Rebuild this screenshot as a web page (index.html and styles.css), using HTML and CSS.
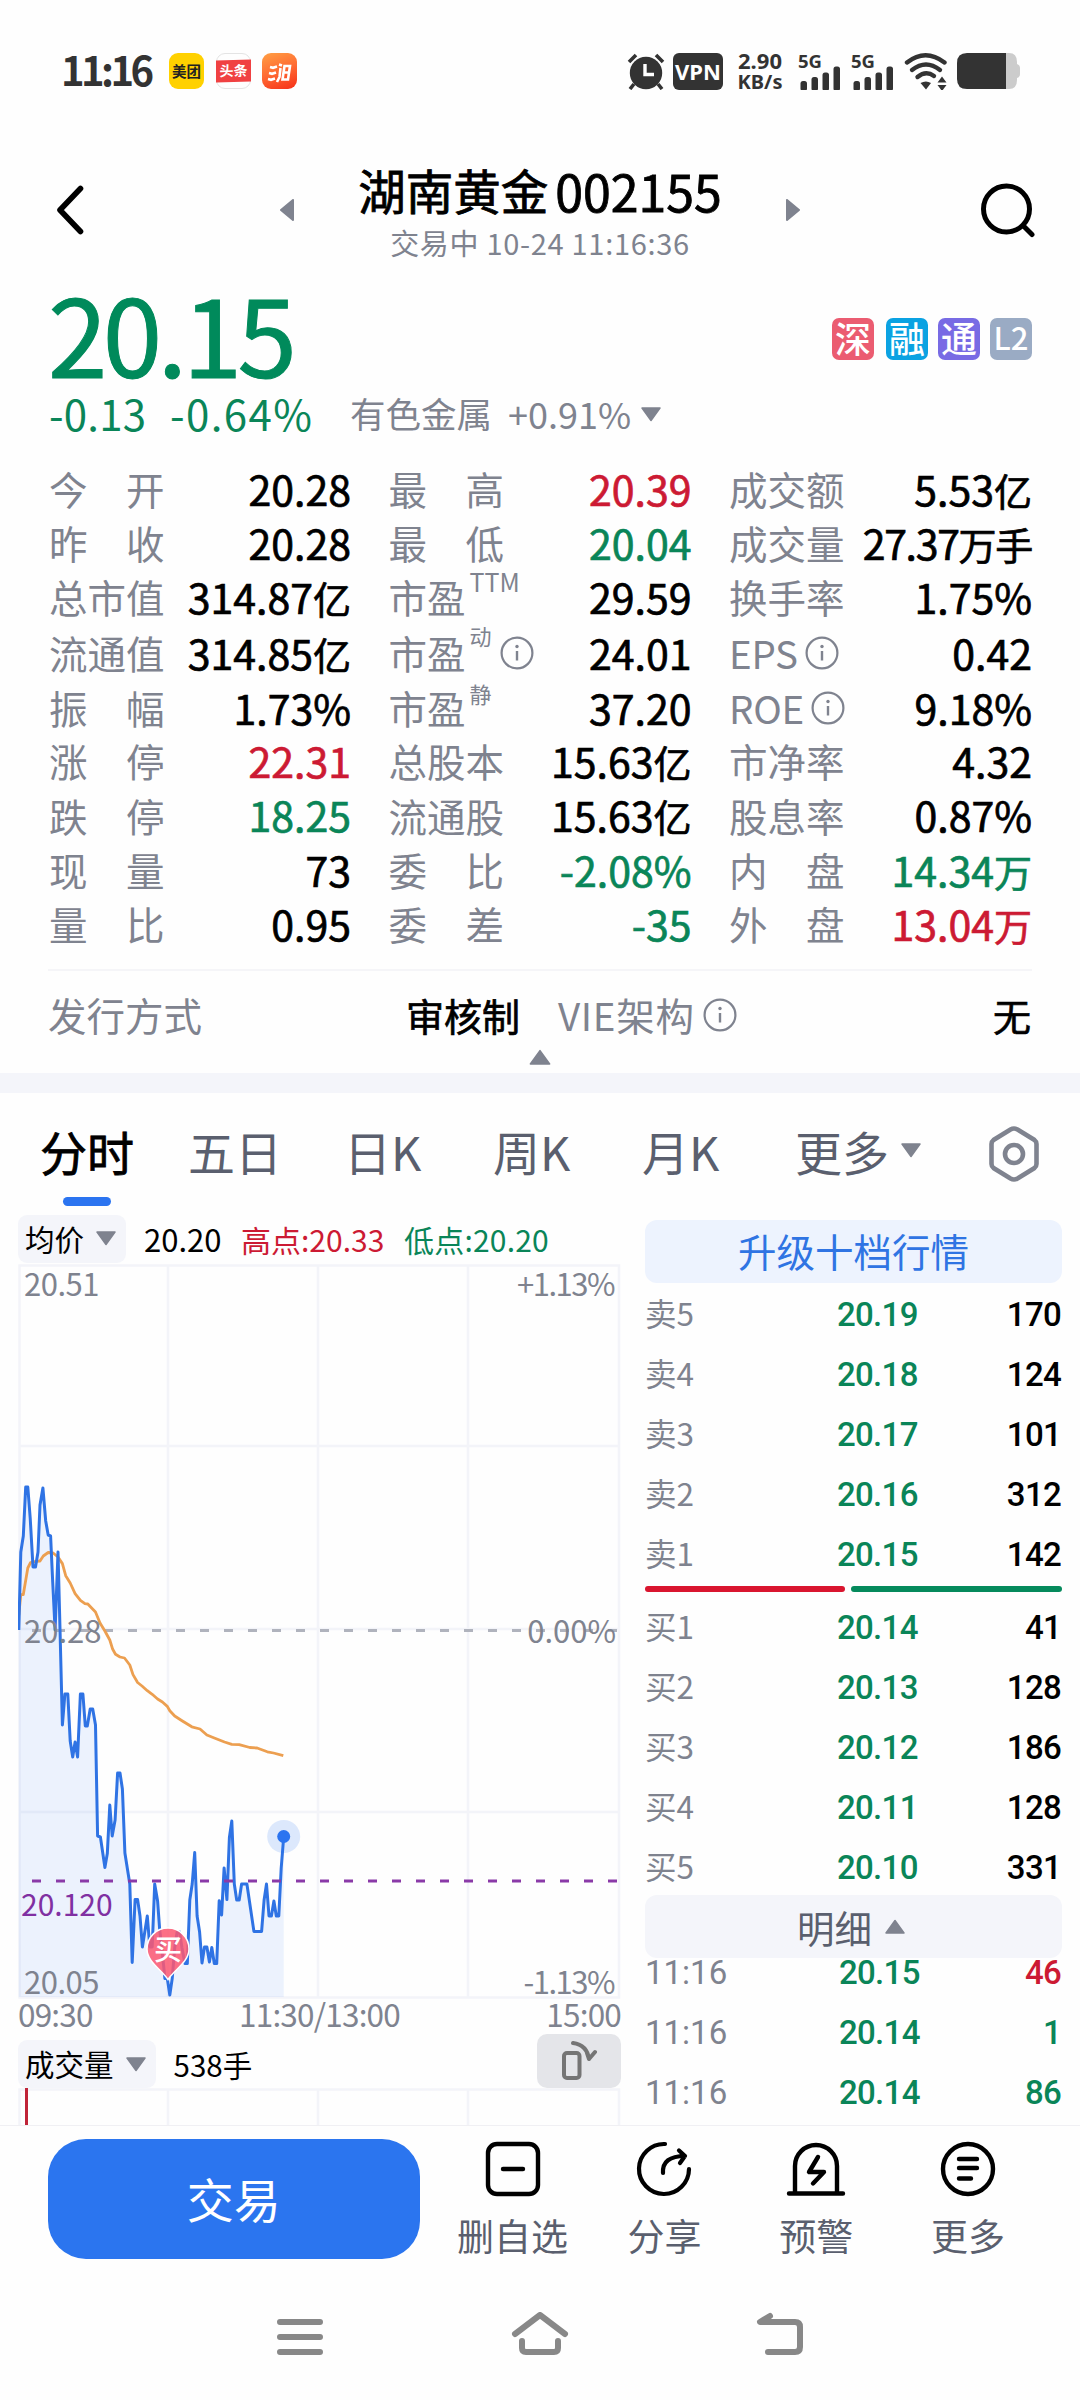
FILE: index.html
```
<!DOCTYPE html>
<html lang="zh-CN">
<head>
    <meta charset="UTF-8">
    <meta name="viewport" content="width=device-width, initial-scale=1.0">
    <title>湖南黄金 002155</title>
    <link rel="stylesheet" href="styles.css">
</head>
<body>

    <svg width="0" height="0" class="defs">
        <symbol id="info" viewBox="0 0 34 34">
            <circle cx="17" cy="17" r="15.4" fill="none" stroke="#7f838f" stroke-width="2.2"/>
            <path d="M17 15v9.5" stroke="#7f838f" stroke-width="2.4"/>
            <circle cx="17" cy="10.5" r="1.7" fill="#7f838f"/>
        </symbol>
        <symbol id="down" viewBox="0 0 22 15">
            <path d="M2 1h18L11 13.5z" fill="#7f838f" stroke="#7f838f" stroke-width="1.5" stroke-linejoin="round"/>
        </symbol>
        <symbol id="up" viewBox="0 0 22 15">
            <path d="M2 14h18L11 1.5z" fill="#7f838f" stroke="#7f838f" stroke-width="1.5" stroke-linejoin="round"/>
        </symbol>
        <symbol id="signal" viewBox="0 0 43 36">
            <g fill="#333">
                <rect x="2.5" y="27.5" width="6.5" height="10" rx="2.5"/>
                <rect x="13.5" y="23.5" width="6.5" height="14" rx="2.5"/>
                <rect x="24.5" y="19" width="6.5" height="18.5" rx="2.5"/>
                <rect x="35.5" y="13" width="6.5" height="24.5" rx="2.5"/>
            </g>
        </symbol>
    </svg>

    <!-- status bar -->
    <div class="status-bar">
        <span class="clock">11:16</span>
        <span class="app app-meituan">美团</span>
        <span class="app app-toutiao"><b>头条</b></span>
        <span class="app app-hot">
            <svg width="35" height="35" viewBox="0 0 35 35" fill="none" stroke="#fff" stroke-width="2.6">
                <path d="M8 13l3 .8 4-1.300M7 19l3 .8 4-1.300M6 25l3 .8 4-1.300M17 10.500l3 1M18.500 14l-1 9-2.500 5M22.500 12h5.500l-2 13.500h-5.500zM21.500 18.500h5"/>
            </svg>
        </span>
        <div class="status-right">
            <svg class="alarm" width="38" height="37" viewBox="0 0 38 37">
                <circle cx="19" cy="20" r="16.2" fill="#333"/>
                <path d="M2 9l7-7M36 9l-7-7" stroke="#333" stroke-width="3.6"/>
                <path d="M7 31l-4 5M31 31l4 5" stroke="#333" stroke-width="3.6"/>
                <path d="M18 11v10.5h9" fill="none" stroke="#fff" stroke-width="3.4"/>
            </svg>
            <span class="vpn">VPN</span>
            <span class="speed">2.90<br>KB/s</span>
            <span class="signal"><i>5G</i><svg width="43" height="37"><use href="#signal"/></svg></span>
            <span class="signal"><i>5G</i><svg width="43" height="37"><use href="#signal"/></svg></span>
            <svg class="wifi" width="44" height="38" viewBox="0 0 44 38">
                <g fill="none" stroke="#333" stroke-width="4.4" stroke-linecap="round">
                    <path d="M3 10.500q18.500-14.500 37.500 0"/>
                    <path d="M8 18q14-11 28 0"/>
                    <path d="M13.500 25q8.500-7 16.500-1"/>
                </g>
                <path d="M16.500 31q5.500-3 10.500 0l-5 6.500zM33.500 30.500h9l-4.500-6zM33.500 33h9l-4.500 6z" fill="#333"/>
            </svg>
            <svg class="battery" width="64" height="36" viewBox="0 0 64 36">
                <path d="M40 0h12q8 0 8 9v2q3 1 3 4v6q0 3-3 4v2q0 9-8 9H40z" fill="#ccc"/>
                <path d="M49 0H10Q0 0 0 10v16q0 10 10 10h39z" fill="#333"/>
            </svg>
        </div>
    </div>

    <!-- title -->
    <div class="header">
        <svg width="28" height="50" viewBox="0 0 28 50" fill="none" stroke="#000" stroke-width="5.6" stroke-linecap="round" stroke-linejoin="round">
            <path d="M23.500 3.500L3 25l20.500 21.500"/>
        </svg>
        <svg width="14" height="22" viewBox="0 0 14 22"><path d="M1 11L13 1v20z" fill="#7f838f" stroke="#7f838f" stroke-linejoin="round" stroke-width="2"/></svg>
        <div class="title">
            <h1><span>湖南黄金</span><span class="code">002155</span></h1>
            <p>交易中 10-24 11:16:36</p>
        </div>
        <svg width="14" height="22" viewBox="0 0 14 22"><path d="M13 11L1 1v20z" fill="#7f838f" stroke="#7f838f" stroke-linejoin="round" stroke-width="2"/></svg>
        <svg class="search" width="54" height="56" viewBox="0 0 54 56" fill="none" stroke="#000" stroke-width="5" stroke-linecap="round">
            <circle cx="25.500" cy="27" r="23"/>
            <path d="M43 44.500l8 8"/>
        </svg>
    </div>

    <!-- price -->
    <div class="quote">
        <div class="price">20.15</div>
        <div class="tags">
            <span class="tag tag-red">深</span>
            <span class="tag tag-blue">融</span>
            <span class="tag tag-purple">通</span>
            <span class="tag tag-grey">L2</span>
        </div>
    </div>
    <div class="change">
        <span class="green diff">-0.13</span>
        <span class="green pct">-0.64%</span>
        <span class="sector">有色金属</span>
        <span class="sector-pct">+0.91%</span>
        <svg width="22" height="15"><use href="#down"/></svg>
    </div>

    <div class="stats">
        <div class="cell"><label>今　开</label><b>20.28</b></div>
        <div class="cell"><label>最　高</label><b class="red">20.39</b></div>
        <div class="cell"><label>成交额</label><b>5.53<i>亿</i></b></div>

        <div class="cell"><label>昨　收</label><b>20.28</b></div>
        <div class="cell"><label>最　低</label><b class="green">20.04</b></div>
        <div class="cell"><label>成交量</label><b class="tight">27.37<i>万手</i></b></div>

        <div class="cell"><label>总市值</label><b>314.87<i>亿</i></b></div>
        <div class="cell"><label>市盈</label><em class="ttm">TTM</em><b>29.59</b></div>
        <div class="cell"><label>换手率</label><b>1.75%</b></div>

        <div class="cell"><label>流通值</label><b>314.85<i>亿</i></b></div>
        <div class="cell"><label>市盈</label><em>动</em><svg width="34" height="34"><use href="#info"/></svg><b>24.01</b></div>
        <div class="cell ratio-name"><label>EPS</label><svg width="34" height="34"><use href="#info"/></svg><b>0.42</b></div>

        <div class="cell"><label>振　幅</label><b>1.73%</b></div>
        <div class="cell"><label>市盈</label><em>静</em><b>37.20</b></div>
        <div class="cell ratio-name"><label>ROE</label><svg width="34" height="34"><use href="#info"/></svg><b>9.18%</b></div>

        <div class="cell"><label>涨　停</label><b class="red">22.31</b></div>
        <div class="cell"><label>总股本</label><b>15.63<i>亿</i></b></div>
        <div class="cell"><label>市净率</label><b>4.32</b></div>

        <div class="cell"><label>跌　停</label><b class="green">18.25</b></div>
        <div class="cell"><label>流通股</label><b>15.63<i>亿</i></b></div>
        <div class="cell"><label>股息率</label><b>0.87%</b></div>

        <div class="cell"><label>现　量</label><b>73</b></div>
        <div class="cell"><label>委　比</label><b class="green">-2.08%</b></div>
        <div class="cell"><label>内　盘</label><b class="green">14.34<i>万</i></b></div>

        <div class="cell"><label>量　比</label><b>0.95</b></div>
        <div class="cell"><label>委　差</label><b class="green">-35</b></div>
        <div class="cell"><label>外　盘</label><b class="red">13.04<i>万</i></b></div>
    </div>

    <div class="issue">
        <div class="cell"><label>发行方式</label><b><i>审核制</i></b></div>
        <div class="cell"><label class="vie">VIE架构</label><svg width="34" height="34"><use href="#info"/></svg><b><i>无</i></b></div>
    </div>
    <div class="collapse"><svg width="24" height="16"><use href="#up"/></svg></div>

    <!-- period tabs -->
    <div class="tabs">
        <span class="tab active">分时</span>
        <span class="tab">五日</span>
        <span class="tab">日K</span>
        <span class="tab">周K</span>
        <span class="tab">月K</span>
        <span class="tab more">更多<svg width="22" height="15"><use href="#down"/></svg></span>
        <svg class="settings" width="52" height="56" viewBox="0 0 52 56" fill="none" stroke="#7f838f">
            <path d="M22.500 3.500q3.500-2 7 0l17 10.500q2 1.500 2 4v20q0 2.500-2 4l-17 10.500q-3.500 2-7 0L5.500 42q-2-1.500-2-4V18q0-2.500 2-4z" stroke-width="4.6"/>
            <circle cx="26" cy="28" r="9" stroke-width="4.600"/>
        </svg>
    </div>

    <div class="main">
        <div class="chart-col">
            <div class="legend">
                <span class="chip">均价<svg width="22" height="15"><use href="#down"/></svg></span>
                <span class="avg">20.20</span>
                <span class="red high">高点:20.33</span>
                <span class="green low">低点:20.20</span>
            </div>
            <div class="chart">
                <svg width="603" height="736" viewBox="0 0 603 736">
                    <g fill="none" stroke="#f3f4f9" stroke-width="2.5">
                        <path d="M1.500 2.500h599.500v732H1.500zM150 2v732M300 2v732M450 2v732M2 183h599M2 366h599M2 549h599"/>
                    </g>
                    <path id="area" fill="#2b74f0" fill-opacity=".085"/>
                    <path d="M14 367.500h589" stroke="#b0b3bd" stroke-width="3" stroke-dasharray="9 15"/>
                    <polyline fill="none" stroke="#ec9f50" stroke-width="2.800" stroke-linejoin="round" points="0.8,352 2.8,331.6 5.3,331.6 9.8,305 12.6,299.5 17.9,298.4 22,298 25.3,293 30.2,289.5 35.1,290 40,294 44.4,300.6 47.7,312.7 52.2,320 57.1,330.6 62.4,337.4 66.9,340.6 69.8,341 77.5,349 82,360 86.9,368 91.8,377 94.7,386.3 97.5,391.3 102,394 106.5,395 111.8,402 115,411.6 119.6,419.5 124,423 129.3,427.7 134.2,431.3 139.6,436 144.4,439 149.3,443.4 151.8,447.7 156.7,453 164,457.7 173.8,463.8 182,466 188.9,472 196.3,475 206.5,479 213.8,481.3 221.2,481.6 231.8,484.5 239.1,485 249.3,488.8 255.5,490 265.3,492.7"/>
                    <polyline id="price-line" fill="none" stroke="#2f73e4" stroke-width="3" stroke-linejoin="round" points="0.8,367 2.8,289 5.3,273 7.7,224 9.8,224 12.2,255 15,304 17.5,304 20,289 22,242 24.9,225 27.7,258 30.2,272 32.6,273 34.7,319 37.1,367 40,289 42,366 44.4,462 46.9,431 49.8,431 52.2,478 54.7,494 57.1,479 59.6,494 62.4,431 64.9,431 67.3,463 69.3,463 72.2,446 74.7,446 77.5,462 79.6,573 82.4,574 86.9,604.5 89.3,590.6 91.8,542 94.2,573 97.1,557 99.6,510 102,510 104.4,526 106.9,590 111.8,621 114.2,699.5 117.1,636.6 119.6,636.6 122,653 124.4,684 129.3,653 131.8,684 134.2,684 136.7,621 139.6,638 141.6,665.6 144.4,690.6 146.9,715.6 149.3,715.6 151.8,732 154.2,715.6 156.7,685 159.1,669 161.6,669 164,685 166.9,700.6 169.3,700.6 171.8,637 174.2,621 176.7,589.5 179.1,653 181.6,669 184,700 186.5,684 188.9,684 191.4,699 193.8,684.5 196.3,700.6 198.7,700.6 201.2,637.7 203.6,652 206.1,605 208.9,636.6 211.4,574.5 213.8,558 216.3,621 218.7,637 221.2,637 223.6,621 228.9,621 235.9,668.4 243.6,668.4 246.1,637 248.5,621 251,653 253.4,653 255.9,638 258.3,653 260.8,653 263.2,605 265.7,574"/>
                    <path d="M14 618h589" stroke="#8a3aa8" stroke-width="2.800" stroke-dasharray="9 15"/>
                    <circle cx="265.700" cy="573.500" r="16.500" fill="#2b74f0" fill-opacity=".16"/>
                    <circle cx="265.700" cy="573.500" r="6.500" fill="#2b74f0"/>
                    <path d="M150 716.500C144 707 129 699 129 686a21 21 0 0 1 42 0C171 699 156 707 150 716.500z" fill="#fb5872" fill-opacity=".86" stroke="#fff" stroke-width="1.500"/>
                    <text x="150" y="697" text-anchor="middle" class="pin-text">买</text>
                </svg>
                <span class="axis top">20.51</span>
                <span class="axis top right">+1.13%</span>
                <span class="axis mid">20.28</span>
                <span class="axis mid right zero">0.00%</span>
                <span class="axis cost">20.120</span>
                <span class="axis bottom">20.05</span>
                <span class="axis bottom right">-1.13%</span>
            </div>
            <div class="times"><span>09:30</span><span>11:30/13:00</span><span>15:00</span></div>
            <div class="volume-bar">
                <span class="chip">成交量<svg width="22" height="15"><use href="#down"/></svg></span>
                <span class="hands">538手</span>
                <span class="rotate">
                    <svg width="36" height="42" viewBox="0 0 36 42" fill="none" stroke="#757575" stroke-width="4" stroke-linecap="round" stroke-linejoin="round">
                        <rect x="3" y="13" width="15.500" height="25" rx="3"/>
                        <path d="M12 3q14 2 16 16M28 19l6-7M28 19l-2-6"/>
                    </svg>
                </span>
            </div>
            <svg class="volume" width="603" height="39" viewBox="0 0 603 39">
                <path d="M1.500 40V1.500H601V40M150 2v38M300 2v38M450 2v38" fill="none" stroke="#f3f4f9" stroke-width="2.500"/>
                <path d="M8.500 0v39" stroke="#c02438" stroke-width="3"/>
            </svg>
        </div>

        <div class="book">
            <div class="upgrade">升级十档行情</div>
            <div class="level"><span>卖5</span><b class="green">20.19</b><b>170</b></div>
            <div class="level"><span>卖4</span><b class="green">20.18</b><b>124</b></div>
            <div class="level"><span>卖3</span><b class="green">20.17</b><b>101</b></div>
            <div class="level"><span>卖2</span><b class="green">20.16</b><b>312</b></div>
            <div class="level"><span>卖1</span><b class="green">20.15</b><b>142</b></div>
            <div class="ratio"><i class="buy"></i><i class="sell"></i></div>
            <div class="level"><span>买1</span><b class="green">20.14</b><b>41</b></div>
            <div class="level"><span>买2</span><b class="green">20.13</b><b>128</b></div>
            <div class="level"><span>买3</span><b class="green">20.12</b><b>186</b></div>
            <div class="level"><span>买4</span><b class="green">20.11</b><b>128</b></div>
            <div class="level"><span>买5</span><b class="green">20.10</b><b>331</b></div>
            <div class="detail">明细<svg width="22" height="15"><use href="#up"/></svg></div>
            <div class="ticks">
                <div class="level tick"><span>11:16</span><b class="green">20.15</b><b class="red">46</b></div>
                <div class="level tick"><span>11:16</span><b class="green">20.14</b><b class="green">1</b></div>
                <div class="level tick"><span>11:16</span><b class="green">20.14</b><b class="green">86</b></div>
            </div>
        </div>
    </div>

    <!-- bottom actions -->
    <div class="actions">
        <button class="trade">交易</button>
        <div class="action">
            <svg width="56" height="56" viewBox="0 0 56 56" fill="none" stroke="#000" stroke-width="4.400" stroke-linecap="round">
                <rect x="3" y="3" width="50" height="50" rx="9"/>
                <path d="M18 28h20"/>
            </svg>
            <span>删自选</span>
        </div>
        <div class="action">
            <svg width="56" height="56" viewBox="0 0 56 56" fill="none" stroke="#000" stroke-width="4.200" stroke-linecap="round" stroke-linejoin="round">
                <path d="M29 3a25 25 0 1 0 24 25"/>
                <path d="M27 32q-1-17 22-17M43 9.500l6 5.500-5 7"/>
            </svg>
            <span>分享</span>
        </div>
        <div class="action">
            <svg width="60" height="56" viewBox="0 0 60 56" fill="none" stroke="#000" stroke-width="4.400" stroke-linecap="round" stroke-linejoin="round">
                <path d="M9 52V25a21 21 0 0 1 42 0v27M3 52.500h54"/>
                <path d="M32 16l-9 15h15l-11 11.500"/>
            </svg>
            <span>预警</span>
        </div>
        <div class="action">
            <svg width="56" height="56" viewBox="0 0 56 56" fill="none" stroke="#000" stroke-width="4.400" stroke-linecap="round">
                <circle cx="28" cy="28" r="25"/>
                <path d="M19 18h18M19 27h18M19 37.500h12"/>
            </svg>
            <span>更多</span>
        </div>
    </div>

    <div class="nav-bar">
        <svg width="60" height="48" viewBox="0 0 60 48" stroke="#888" stroke-width="6" stroke-linecap="round">
            <path d="M10 10h40M10 25h40M10 40h40"/>
        </svg>
        <svg width="60" height="48" viewBox="0 0 60 48" fill="none" stroke="#888" stroke-width="6" stroke-linecap="round" stroke-linejoin="round">
            <path d="M5 22L30 3l25 19M12 29v7q0 4 4 4h28q4 0 4-4v-7"/>
        </svg>
        <svg width="60" height="48" viewBox="0 0 60 48" fill="none" stroke="#888" stroke-width="6" stroke-linecap="round" stroke-linejoin="round">
            <path d="M20 4L10 10h35q5 0 5 5v20q0 5-5 5H18"/>
        </svg>
    </div>

    <script>
        // Fill the area under the price line down to the bottom of the chart
        const linePoints = document.getElementById('price-line').getAttribute('points');
        document.getElementById('area').setAttribute('d', `M0.8,734 L${linePoints.split(' ').join(' L')} L265.7,734 Z`);
    </script>

</body>
</html>
```
FILE: styles.css
```
* {
    box-sizing: border-box;
}

body {
    width: 1080px;
    height: 2400px;
    margin: 0;
    overflow: hidden;
    background: #fefefe;
    color: #000;
    font-family: "Noto Sans CJK SC", "Noto Sans", sans-serif;
    line-height: 1;
}

i, em {
    font-style: normal;
}

b {
    font-weight: 500;
}

svg {
    display: block;
    flex: none;
}

.defs {
    position: absolute;
}

.red {
    color: #cc1a33;
}

.green {
    color: #0a8558;
}

/* status bar */
.status-bar {
    display: flex;
    align-items: center;
    height: 142px;
    padding: 0 59px 0 61px;
    color: #333;
}

.clock {
    width: 108px;
    font-size: 40px;
    font-weight: 700;
    letter-spacing: -3.6px;
    line-height: 40px;
    padding-bottom: 4px;
}

.app {
    display: flex;
    align-items: center;
    justify-content: center;
    width: 35px;
    height: 36px;
    margin-right: 11.500px;
    border-radius: 9px;
    font-size: 14.500px;
    font-weight: 700;
    white-space: nowrap;
}

.app-meituan {
    background: #ffd100;
    color: #222;
}

.app-toutiao {
    border: 1px solid #e4e4e4;
}

.app-toutiao b {
    flex: none;
    width: 35px;
    height: 22px;
    line-height: 21px;
    text-align: center;
    background: #f04142;
    color: #fff;
    font-size: 14px;
    font-weight: 700;
    transform: skewY(-1.5deg);
}

.app-hot {
    background: linear-gradient(160deg, #ffa044, #ff6a33 50%, #f62f17);
}

.status-right {
    display: flex;
    align-items: center;
    height: 37px;
    margin-left: auto;
}

.vpn {
    width: 50px;
    height: 37px;
    margin: 0 14px 0 8px;
    border-radius: 6px;
    background: #333;
    color: #fff;
    font: 700 22px/37px "Noto Sans", sans-serif;
    text-align: center;
}

.speed {
    width: 46px;
    margin-right: 15px;
    font: 700 20px/22px "Noto Sans", sans-serif;
    text-align: center;
    white-space: nowrap;
}

.speed::first-line {
    font-size: 22px;
}

.signal {
    position: relative;
    width: 43px;
    margin-right: 10px;
}

.signal i {
    position: absolute;
    left: 0;
    top: -3px;
    font: 700 18.500px/22px "Noto Sans", sans-serif;
}

.wifi {
    margin-right: 9px;
}

/* header */
.header {
    display: grid;
    grid-template-columns: 223px 14px 492px 14px 1fr;
    align-items: center;
    height: 136px;
    padding: 0 45px 0 57px;
}

.title {
    text-align: center;
}

.title h1 {
    display: flex;
    justify-content: center;
    gap: 7px;
    margin: 3px 0 0;
    font-size: 47.500px;
    font-weight: 400;
    line-height: 56px;
    white-space: nowrap;
    -webkit-text-stroke: 0.8px;
}

.title .code {
    font-size: 50px;
}

.title p {
    margin: 5px 0 0;
    color: #7f838f;
    font-size: 29px;
    letter-spacing: 0.7px;
    line-height: 38px;
}

.search {
    justify-self: end;
}

/* price */
.quote {
    display: flex;
    justify-content: space-between;
    height: 112px;
    padding: 0 48px;
}

.price {
    color: #008a5b;
    font-size: 107px;
    letter-spacing: -4.6px;
    line-height: 108px;
    -webkit-text-stroke: 1px;
}

.tags {
    display: flex;
    gap: 10px;
    padding-top: 40px;
}

.tag {
    width: 42px;
    height: 42px;
    border-radius: 7px;
    color: #fff;
    font-size: 36px;
    font-weight: 500;
    line-height: 38px;
    text-align: center;
}

.tag-red {
    background: #eb5c71;
    margin-right: 2px;
}

.tag-blue {
    background: #0ba2e2;
}

.tag-purple {
    background: #786be4;
}

.tag-grey {
    background: #9aabc4;
    font-size: 31px;
}

.change {
    display: flex;
    align-items: center;
    height: 46px;
    padding-left: 49px;
    font-size: 42px;
}

.change .diff {
    width: 121px;
    letter-spacing: 0.2px;
}

.change .pct {
    width: 180px;
    letter-spacing: 1.4px;
}

.sector {
    width: 158px;
    color: #7f838f;
    font-size: 35.500px;
}

.sector-pct {
    width: 132px;
    color: #7f838f;
    font-size: 36px;
}

.change svg {
    margin-top: 3px;
}

/* stats table */
.stats {
    display: grid;
    grid-template-columns: 302px 303px 303px;
    grid-template-rows: 54px 54px 54px 58px 52px 54px 55px 54px 54px;
    column-gap: 37.500px;
    margin-top: 25px;
    padding-left: 49px;
}

.cell {
    display: flex;
    align-items: center;
    white-space: nowrap;
}

.cell label {
    color: #7f838f;
    font-size: 38.500px;
}

.cell b {
    margin-left: auto;
    font-size: 41px;
    font-weight: 400;
    -webkit-text-stroke: 0.7px;
}

.cell b i {
    font-size: 38px;
}

.cell .tight {
    letter-spacing: -1.3px;
}

.cell svg {
    margin: 2px 0 0 8px;
}

.cell label {
    padding-top: 1px;
}

.ratio-name svg {
    margin-left: 7px;
}

.ratio-name label {
    letter-spacing: -0.3px;
}

.cell .vie {
    margin-left: 1px;
    letter-spacing: 0.7px;
}

.cell em {
    align-self: flex-start;
    margin: 0 0 0 4px;
    color: #7f838f;
    font-size: 22px;
    line-height: 24px;
}

.cell .ttm {
    font-size: 25px;
}

.issue {
    display: grid;
    grid-template-columns: 472px 474px;
    column-gap: 37px;
    height: 82px;
    margin: 19px 48px 0;
    padding-top: 5px;
    border-top: 2px solid #f5f5f8;
}

.collapse {
    display: flex;
    justify-content: center;
    height: 43px;
    margin-top: -2px;
    border-bottom: 20px solid #f4f5fa;
}

/* tabs */
.tabs {
    display: flex;
    align-items: center;
    height: 120px;
    margin-top: 1px;
    padding-left: 40px;
    color: #5a5f6e;
    font-size: 47px;
}

.collapse {
    height: 44px;
}

.tab {
    position: relative;
    width: 156px;
    padding-bottom: 7px;
    white-space: nowrap;
}

.tab.active {
    width: 148px;
    color: #000;
    -webkit-text-stroke: 0.8px;
}

.tab.active::after {
    content: "";
    position: absolute;
    left: 23px;
    top: 70px;
    width: 48px;
    height: 9px;
    border-radius: 5px;
    background: #2b74f0;
}

.tab:nth-child(3) {
    width: 149px;
}

.tab:nth-child(4) {
    width: 149px;
}

.tab:nth-child(5) {
    width: 153px;
}

.tab.more {
    display: flex;
    align-items: center;
    gap: 11px;
    width: 193px;
}

/* chart */
.main {
    display: flex;
    height: 912px;
    overflow: hidden;
    border-bottom: 1px solid #f0f0f4;
}

.chart-col {
    width: 603px;
    margin-left: 18px;
}

.legend, .volume-bar {
    display: flex;
    align-items: center;
    height: 49px;
    font-size: 31px;
}

.chip {
    display: flex;
    align-items: center;
    gap: 11px;
    height: 48px;
    padding: 0 9px 0 7px;
    border-radius: 9px;
    background: #f4f5fa;
    font-size: 29.500px;
    white-space: nowrap;
}

.avg {
    width: 97px;
    margin-left: 18px;
}

.high {
    width: 163px;
    font-size: 30px;
    white-space: nowrap;
}

.low {
    font-size: 30px;
    letter-spacing: 0.2px;
    white-space: nowrap;
}

.chart {
    position: relative;
    height: 734px;
}

.pin-text {
    fill: #fff;
    font-size: 28px;
    font-weight: 500;
}

.axis {
    position: absolute;
    left: 6px;
    color: #7f838f;
    font-size: 31px;
    letter-spacing: -0.5px;
    line-height: 32px;
}

.axis.right {
    left: auto;
    right: 7px;
    letter-spacing: -1.5px;
}

.axis.right.zero {
    right: 5px;
    letter-spacing: 0;
}

.axis.top {
    top: 4px;
}

.axis.mid {
    top: 351px;
    letter-spacing: 0;
}

.axis.bottom {
    top: 702px;
}

.axis.cost {
    left: 3px;
    top: 624px;
    color: #8030a2;
    font-size: 30px;
    letter-spacing: 0;
}

.times {
    display: flex;
    justify-content: space-between;
    height: 37px;
    color: #7f838f;
    font-size: 31.500px;
    letter-spacing: -0.8px;
    line-height: 33px;
}

.volume-bar {
    align-items: flex-end;
    height: 54px;
}

.hands {
    margin-left: 18px;
    font-size: 29.500px;
    line-height: 48px;
}

.rotate {
    display: flex;
    align-items: center;
    justify-content: center;
    width: 84px;
    height: 54px;
    margin-left: auto;
    border-radius: 10px;
    background: #e4e5e9;
}

/* order book */
.book {
    width: 417px;
    margin-left: 24px;
    padding-top: 6px;
}

.upgrade, .detail {
    height: 63px;
    border-radius: 12px;
    background: #edf3fe;
    color: #2f74e3;
    font-size: 38.500px;
    line-height: 61px;
    text-align: center;
}

.upgrade {
    margin-bottom: 1px;
}

.level {
    display: grid;
    grid-template-columns: 192px 100px 1fr;
    align-items: center;
    height: 60px;
    padding-right: 1px;
    font-size: 33px;
}

.level span {
    color: #7f838f;
    font-size: 31.500px;
    padding-bottom: 2px;
}

.level b {
    font-family: Roboto, sans-serif;
    letter-spacing: -0.7px;
}

.level b:last-child {
    text-align: right;
}

.ratio {
    display: flex;
    gap: 6px;
    height: 8px;
    margin: 2px 0 3px;
}

.ratio i {
    height: 6px;
    border-radius: 3px;
}

.ratio .buy {
    width: 200px;
    background: #d9152f;
}

.ratio .sell {
    width: 211px;
    background: #058a5c;
}

.detail {
    display: flex;
    align-items: center;
    justify-content: center;
    gap: 12px;
    margin-top: -2px;
    padding-right: 4px;
    background: #f4f5fa;
    color: #5a5f6e;
    font-size: 37.500px;
    line-height: 59px;
}

.ticks {
    margin-top: -16px;
}

.tick {
    grid-template-columns: 194px 100px 1fr;
}

.tick span {
    font: 400 33px Roboto, sans-serif;
    padding: 0;
}

/* bottom actions */
.actions {
    display: flex;
    height: 158px;
    padding: 13px 36px 0 48px;
}

.trade {
    width: 372px;
    height: 120px;
    margin-right: 17px;
    padding: 0 0 4px;
    border: none;
    border-radius: 38px;
    background: #2b75ef;
    color: #fff;
    font-family: inherit;
    font-size: 47px;
}

.action {
    display: flex;
    flex-direction: column;
    align-items: center;
    width: 152px;
    padding-top: 2px;
    color: #5a5f6e;
    font-size: 37px;
    white-space: nowrap;
}

.action span {
    margin-top: 20px;
}

/* system navigation */
.nav-bar {
    display: flex;
    justify-content: center;
    gap: 180px;
    padding-top: 28px;
}
```
